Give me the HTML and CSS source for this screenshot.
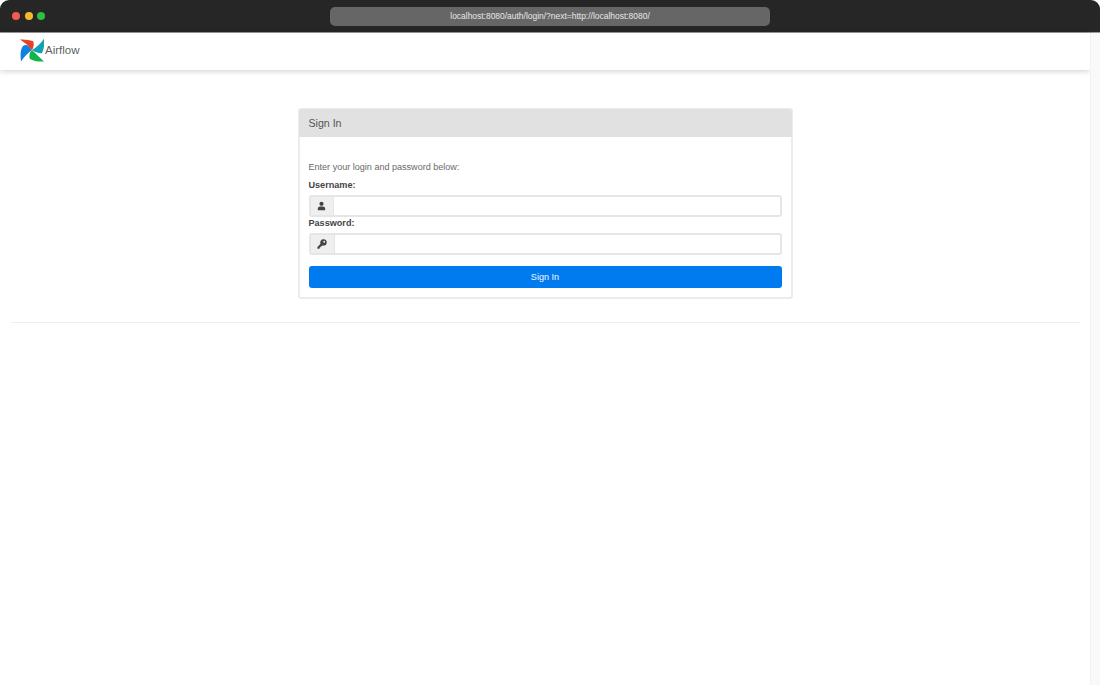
FILE: index.html
```html
<!DOCTYPE html>
<html lang="en">
<head>
<meta charset="utf-8">
<title>Airflow - Sign In</title>
<link rel="stylesheet" href="styles.css">
</head>
<body>
<div class="window">
  <header class="titlebar">
    <div class="lights">
      <span class="light red"></span>
      <span class="light yellow"></span>
      <span class="light green"></span>
    </div>
    <div class="address">localhost:8080/auth/login/?next=http://localhost:8080/</div>
  </header>
  <div class="viewport">
    <div class="page">
      <nav class="navbar">
        <svg class="logo" viewBox="0 0 24 24" width="24" height="24" aria-hidden="true">
          <path fill="#0f7fe0" d="M1 23.5Q-.5 12 3 8Q7 5 12 12Q6 16 1 23.5Z"/>
          <path fill="#e8412a" d="M0 1.5Q7 1 13 3Q15 7 12 12Q6 5 0 1.5Z"/>
          <path fill="#11a3b5" d="M24 .8Q25 9 22 15Q17 16 12 12Q19 8 24 .8Z"/>
          <path fill="#12b54a" d="M24 23.5Q15 24 10 21Q8 16 12 12Q18 18 24 23.5Z"/>
        </svg>
        <span class="brand">Airflow</span>
      </nav>
      <main class="content">
        <section class="panel">
          <h1 class="panel-title">Sign In</h1>
          <form class="panel-body">
            <p class="hint">Enter your login and password below:</p>
            <label class="field-label" for="username">Username:</label>
            <div class="input-group">
              <span class="addon addon-user">
                <svg viewBox="0 0 16 16" width="9" height="10" aria-hidden="true"><circle cx="8" cy="4.2" r="3.7" fill="#444"/><path fill="#444" d="M1.5 15.5v-3c0-2.6 2.2-3.8 3.8-3.8h5.4c1.6 0 3.8 1.2 3.8 3.8v3Z"/></svg>
              </span>
              <input class="text-input" id="username" type="text">
            </div>
            <label class="field-label" for="password">Password:</label>
            <div class="input-group">
              <span class="addon">
                <svg viewBox="0 0 16 16" width="10" height="10" aria-hidden="true"><path fill="#444" fill-rule="evenodd" d="M10.5.5a5 5 0 0 1 0 10c-.6 0-1.1-.1-1.6-.3L7.5 11.6H6v1.6H4.4v1.6l-1 .7H.7v-2.8l5-5a5 5 0 0 1 4.8-7.2Zm1 2.4a1.5 1.5 0 1 0 0 3 1.5 1.5 0 0 0 0-3Z"/></svg>
              </span>
              <input class="text-input" id="password" type="password">
            </div>
            <button class="submit" type="button">Sign In</button>
          </form>
        </section>
        <hr class="rule">
      </main>
    </div>
    <div class="scrollbar"></div>
  </div>
</div>
</body>
</html>
```
FILE: styles.css
```css
* { box-sizing: border-box; }
html, body { margin: 0; height: 100%; background: #fff; overflow: hidden; }
body { font-family: "Liberation Sans", Arial, sans-serif; color: #555; }

.window { display: flex; flex-direction: column; height: 685px; }

.titlebar {
  flex: none;
  height: 33px;
  display: flex;
  align-items: center;
  padding: 0 330px 0 12px;
  background: #262626;
  border-bottom: 1px solid #9a9a9a;
  border-radius: 9px 9px 0 0;
}
.lights { display: flex; gap: 4.5px; width: 318px; flex: none; }
.light { width: 8px; height: 8px; border-radius: 50%; }
.light.red { background: #f45a52; }
.light.yellow { background: #f6b92c; }
.light.green { background: #2ac13f; }
.address {
  flex: 1;
  height: 19px;
  line-height: 19px;
  text-align: center;
  font-size: 8.46px;
  color: #e8e8e8;
  background: #666;
  border-radius: 5px;
}

.viewport { flex: 1; display: flex; min-height: 0; }
.page { flex: 1; min-width: 0; }
.scrollbar { flex: none; width: 10px; background: #f9f9f9; border-left: 1px solid #f2f2f2; }

.navbar {
  height: 37px;
  display: flex;
  align-items: center;
  padding: 0 0 3px 20px;
  background: #fff;
  box-shadow: 0 1px 6px rgba(0, 0, 0, .2);
}
.logo { flex: none; }
.brand { margin-left: 1px; font-size: 11.5px; color: #5f5f5f; }

.content { padding-top: 38px; }
.panel {
  width: 495px;
  margin: 0 auto;
  background: #fff;
  border: 2px solid #ececec;
  border-radius: 3px;
}
.panel-title {
  margin: -1px -1px 0;
  height: 28px;
  padding-left: 10px;
  line-height: 28px;
  font-size: 10.6px;
  font-weight: 400;
  color: #555;
  background: #e1e1e1;
  border-radius: 3px 3px 0 0;
}
.panel-body { padding: 24px 9px 9px; }
.hint { margin: 0 0 6px; height: 12px; line-height: 12px; font-size: 9.05px; color: #6a6a6a; }
.field-label { display: block; height: 12px; margin-bottom: 4px; line-height: 12px; font-size: 9.1px; font-weight: 700; color: #444; }
.input-group {
  display: flex;
  height: 22px;
  border: 2px solid #e6e6e6;
  border-radius: 3px;
  background: #fff;
}
.addon {
  flex: none;
  width: 24px;
  display: flex;
  align-items: center;
  justify-content: center;
  background: #efefef;
  border-right: 1px solid #e6e6e6;
}
.addon-user { width: 23px; }
.text-input { flex: 1; min-width: 0; border: 0; padding: 0 6px; background: transparent; outline: 0; }
.submit {
  display: block;
  width: 100%;
  height: 22px;
  margin-top: 11px;
  padding: 0;
  border: 0;
  border-radius: 3px;
  background: #007bef;
  color: #f2f7ff;
  font: 9.1px "Liberation Sans", Arial, sans-serif;
}
.rule { margin: 23px 10px 0 11px; border: 0; border-top: 1px solid #eeeeee; }
```
